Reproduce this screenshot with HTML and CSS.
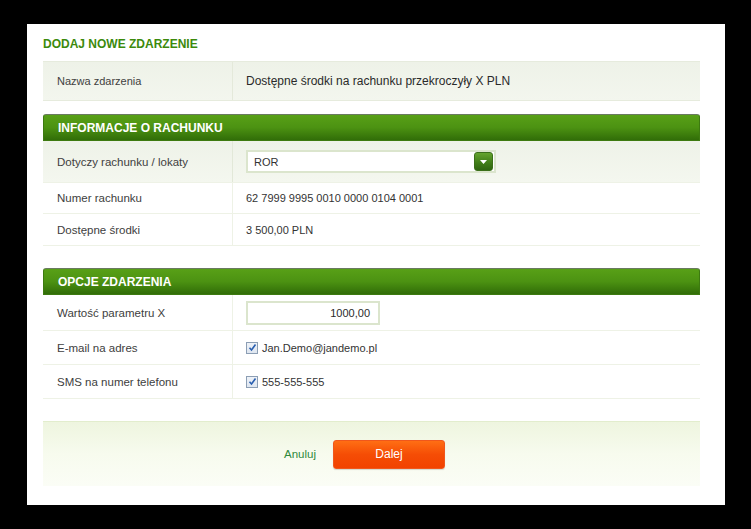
FILE: index.html
```html
<!DOCTYPE html>
<html lang="pl">
<head>
  <meta charset="UTF-8">
  <title>Dodaj nowe zdarzenie</title>
  <link rel="stylesheet" href="styles.css">
</head>
<body>
  <div class="panel">
    <h1 class="title">DODAJ NOWE ZDARZENIE</h1>

    <div class="row row-name">
      <div class="label">Nazwa zdarzenia</div>
      <div class="value value-big">Dostępne środki na rachunku przekroczyły X PLN</div>
    </div>

    <div class="section">
      <div class="section-head">INFORMACJE O RACHUNKU</div>
      <div class="row row-select">
        <div class="label">Dotyczy rachunku / lokaty</div>
        <div class="value">
          <div class="select">
            <span>ROR</span>
            <span class="select-btn">
              <svg width="7" height="4" viewBox="0 0 7 4"><path d="M0 0h7L3.5 4z" fill="#fff"/></svg>
            </span>
          </div>
        </div>
      </div>
      <div class="row row-plain">
        <div class="label">Numer rachunku</div>
        <div class="value">62 7999 9995 0010 0000 0104 0001</div>
      </div>
      <div class="row row-plain">
        <div class="label">Dostępne środki</div>
        <div class="value">3 500,00 PLN</div>
      </div>
    </div>

    <div class="section">
      <div class="section-head">OPCJE ZDARZENIA</div>
      <div class="row row-input">
        <div class="label">Wartość parametru X</div>
        <div class="value">
          <div class="input">1000,00</div>
        </div>
      </div>
      <div class="row row-check">
        <div class="label">E-mail na adres</div>
        <div class="value">
          <span class="check"><svg width="9" height="9" viewBox="0 0 9 9"><path d="M1.5 4.8l2 2.2 4-5.5" fill="none" stroke="#2a5fb0" stroke-width="1.6"/></svg></span>
          Jan.Demo@jandemo.pl
        </div>
      </div>
      <div class="row row-check">
        <div class="label">SMS na numer telefonu</div>
        <div class="value">
          <span class="check"><svg width="9" height="9" viewBox="0 0 9 9"><path d="M1.5 4.8l2 2.2 4-5.5" fill="none" stroke="#2a5fb0" stroke-width="1.6"/></svg></span>
          555-555-555
        </div>
      </div>
    </div>

    <div class="footer">
      <a class="cancel" href="#">Anuluj</a>
      <button class="next">Dalej</button>
    </div>
  </div>
</body>
</html>
```

FILE: styles.css
```css
* {
  margin: 0;
  padding: 0;
  box-sizing: border-box;
}

body {
  background-color: #000;
  font-family: 'Liberation Sans', Arial, sans-serif;
  color: #3a3a3a;
}

.panel {
  margin: 24px 0 0 27px;
  width: 698px;
  height: 481px;
  background-color: #fff;
  padding: 13px 25px 0 16px;
}

.title {
  font-size: 12px;
  font-weight: bold;
  color: #3c8a0c;
  line-height: 14px;
  height: 24px;
}

.row {
  display: flex;
  align-items: center;
  border-bottom: 1px solid #eef2e6;
}

.label {
  width: 190px;
  align-self: stretch;
  display: flex;
  align-items: center;
  padding-left: 14px;
  font-size: 11.5px;
  color: #404040;
  border-right: 1px solid #eef2e6;
}

.value {
  flex: 1;
  padding-left: 13px;
  font-size: 11px;
  color: #333;
  display: flex;
  align-items: center;
}

.value-big {
  font-size: 12px;
  color: #2a2a2a;
}

.row-name {
  height: 40px;
  background: linear-gradient(#eef2e8, #f3f6ee);
  border-top: 1px solid #e6ebdd;
  border-bottom: 1px solid #e6ebdd;
}

.row-name .label {
  font-size: 11px;
  border-right-color: #e4e9da;
}

.section {
  margin-top: 13px;
}

.section + .section {
  margin-top: 22px;
}

.section-head {
  height: 27px;
  line-height: 27px;
  padding-left: 14px;
  font-size: 12px;
  font-weight: bold;
  color: #fff;
  background: linear-gradient(#58a017, #4c9212 50%, #316d08);
  border: 1px solid #3d7a10;
  border-top-color: #6a7a60;
  border-radius: 3px 3px 0 0;
}

.row-select {
  height: 42px;
  background: linear-gradient(#eef2e8, #f4f7ef);
}

.row-select .label {
  border-right-color: #e2e8d8;
}

.select {
  width: 250px;
  height: 23px;
  border: 2px solid #dbe5cd;
  background-color: #fff;
  display: flex;
  align-items: center;
  justify-content: space-between;
  padding: 0 1px 0 6px;
  font-size: 11px;
}

.select-btn {
  width: 19px;
  height: 19px;
  border-radius: 3px;
  border: 1px solid #3b6f1a;
  background: linear-gradient(#64a42e, #3f7c17 60%, #2f6510);
  display: flex;
  align-items: center;
  justify-content: center;
}

.row-plain {
  height: 31px;
}

.row-plain + .row-plain {
  height: 32px;
}

.row-input {
  height: 36px;
}

.input {
  width: 134px;
  height: 24px;
  border: 2px solid #dbe5cd;
  text-align: right;
  line-height: 20px;
  padding-right: 8px;
  font-size: 11px;
  color: #2a2a2a;
}

.row-check {
  height: 34px;
}

.check {
  width: 12px;
  height: 12px;
  border: 1px solid #8c9eb4;
  background: linear-gradient(#eef2f8, #dfe6f0);
  display: inline-flex;
  align-items: center;
  justify-content: center;
  margin-right: 4px;
}

.footer {
  margin-top: 22px;
  height: 65px;
  background: linear-gradient(#eef5df, #f7fbee 50%, #fbfdf6);
  border-top: 1px solid #e2edcd;
  display: flex;
  align-items: center;
  justify-content: center;
  gap: 17px;
  padding-right: 14px;
}

.cancel {
  font-size: 11.5px;
  color: #2f8a3c;
  text-decoration: none;
}

.next {
  width: 112px;
  height: 29px;
  border: 1px solid #f0571c;
  border-radius: 3px;
  background: linear-gradient(#ff6e14, #f54d05 50%, #f24200);
  color: #fff;
  font-family: 'Liberation Sans', Arial, sans-serif;
  font-size: 12px;
  cursor: pointer;
  box-shadow: 0 1px 1px rgba(0, 0, 0, 0.15);
}
```
